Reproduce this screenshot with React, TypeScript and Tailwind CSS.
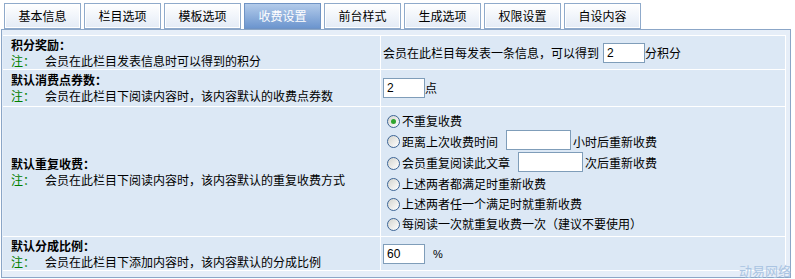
import React from "react";

const tabs = ["基本信息", "栏目选项", "模板选项", "收费设置", "前台样式", "生成选项", "权限设置", "自设内容"];

function Radio({ checked = false }: { checked?: boolean }) {
  return (
    <span className="relative inline-flex h-[13px] w-[13px] shrink-0 items-center justify-center rounded-full border border-[#3d6595] bg-gradient-to-br from-[#d4d4ce] to-white">
      {checked && <span className="h-[5px] w-[5px] rounded-full bg-[#2fa52f]" />}
    </span>
  );
}

function Field({ value = "", w = "w-[42px]" }: { value?: string; w?: string }) {
  return (
    <span className={`inline-flex h-[20px] ${w} items-center border border-[#7f9db9] bg-white pl-[3px] font-['Liberation_Sans'] text-[12px] leading-none text-black`}>
      {value}
    </span>
  );
}

function Note({ children }: { children: React.ReactNode }) {
  return (
    <div>
      <span className="text-[#008000]">注：</span>
      <span className="ml-[10px]">{children}</span>
    </div>
  );
}

export default function App() {
  return (
    <div className="relative h-[279px] w-[795px] overflow-hidden bg-white font-['Noto_Sans_CJK_SC',sans-serif] text-[12px] text-black">
      {/* Tabs */}
      <div className="flex gap-[3px] pl-[4px] pt-[3px]">
        {tabs.map((t) => (
          <div
            key={t}
            className={
              t === "收费设置"
                ? "flex h-[26px] w-[77px] items-center justify-center border border-[#6f93c4] bg-gradient-to-b from-[#b3cbea] to-[#6c95ce] text-white"
                : "flex h-[26px] w-[77px] items-center justify-center border border-[#8faacb] bg-gradient-to-b from-white to-[#e3ebf6] shadow-[inset_0_0_0_1px_#fff]"
            }
          >
            {t}
          </div>
        ))}
      </div>

      {/* Panel */}
      <div className="ml-px w-[790px] border border-[#8ba6c7] bg-[#e6eef8] pb-[6px] pl-px pr-[4px] pt-[5px]">
        <div className="grid grid-cols-[377px_1fr] gap-px bg-white py-px pr-px leading-[16px]">
          {/* Row 1 */}
          <div className="flex h-[33px] flex-col justify-center bg-[#dce8f5] pl-[8px]">
            <div className="font-bold">积分奖励：</div>
            <Note>会员在此栏目发表信息时可以得到的积分</Note>
          </div>
          <div className="flex h-[33px] items-center bg-[#dce8f5] pl-[2px]">
            <span>会员在此栏目每发表一条信息，可以得到</span>
            <span className="ml-[4px]">
              <Field value="2" />
            </span>
            <span>分积分</span>
          </div>

          {/* Row 2 */}
          <div className="flex h-[36px] flex-col justify-center bg-[#dce8f5] pl-[8px]">
            <div className="font-bold">默认消费点券数：</div>
            <Note>会员在此栏目下阅读内容时，该内容默认的收费点券数</Note>
          </div>
          <div className="flex h-[36px] items-center bg-[#dce8f5] pl-[2px]">
            <Field value="2" />
            <span>点</span>
          </div>

          {/* Row 3 */}
          <div className="flex h-[129px] flex-col justify-center bg-[#dce8f5] pl-[8px]">
            <div className="font-bold">默认重复收费：</div>
            <Note>会员在此栏目下阅读内容时，该内容默认的重复收费方式</Note>
          </div>
          <div className="flex h-[129px] flex-col bg-[#dce8f5] pl-[6px] pt-[4px]">
            <div className="flex h-[20px] items-center gap-[2px]">
              <Radio checked />
              <span>不重复收费</span>
            </div>
            <div className="flex h-[21px] items-center gap-[2px]">
              <Radio />
              <span>距离上次收费时间</span>
              <span className="ml-[6px]">
                <Field w="w-[65px]" />
              </span>
              <span>小时后重新收费</span>
            </div>
            <div className="flex h-[22px] items-center gap-[2px]">
              <Radio />
              <span>会员重复阅读此文章</span>
              <span className="ml-[6px]">
                <Field w="w-[65px]" />
              </span>
              <span>次后重新收费</span>
            </div>
            <div className="flex h-[20px] items-center gap-[2px]">
              <Radio />
              <span>上述两者都满足时重新收费</span>
            </div>
            <div className="flex h-[20px] items-center gap-[2px]">
              <Radio />
              <span>上述两者任一个满足时就重新收费</span>
            </div>
            <div className="flex h-[20px] items-center gap-[2px]">
              <Radio />
              <span>每阅读一次就重复收费一次（建议不要使用）</span>
            </div>
          </div>

          {/* Row 4 */}
          <div className="flex h-[33px] flex-col justify-center bg-[#dce8f5] pl-[8px]">
            <div className="font-bold">默认分成比例：</div>
            <Note>会员在此栏目下添加内容时，该内容默认的分成比例</Note>
          </div>
          <div className="flex h-[33px] items-center bg-[#dce8f5] pl-[2px]">
            <Field value="60" />
            <span className="ml-[8px] font-['Liberation_Sans'] text-[11px]">%</span>
          </div>
        </div>
      </div>

      {/* Watermark */}
      <div className="absolute bottom-[1px] right-[4px] text-[13px] leading-[14px] text-[#aac4e2]">动易网络</div>
    </div>
  );
}
